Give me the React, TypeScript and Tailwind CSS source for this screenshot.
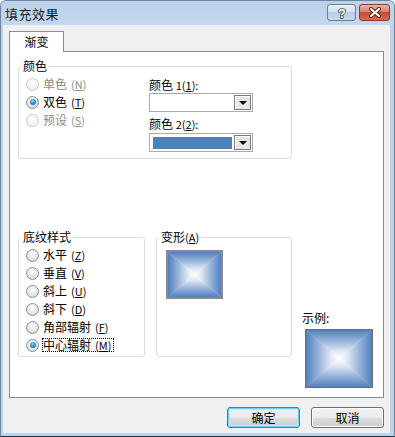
import type { ReactNode } from "react";

function Radio({ checked, disabled }: { checked?: boolean; disabled?: boolean }) {
  return (
    <span
      className={
        disabled
          ? "w-[13px] h-[13px] rounded-full border border-[#c9c9c9] bg-[radial-gradient(circle_at_50%_35%,#ffffff,#ececec)] flex items-center justify-center shrink-0"
          : "w-[13px] h-[13px] rounded-full border border-[#8e8f8f] bg-[radial-gradient(circle_at_50%_35%,#ffffff,#e6e6e6_55%,#cfcfcf)] flex items-center justify-center shrink-0"
      }
    >
      {checked && (
        <span className="w-[6px] h-[6px] rounded-full bg-[radial-gradient(circle_at_45%_35%,#8fd8ff,#1c86d4_55%,#0b5aa0)]" />
      )}
    </span>
  );
}

function Key({ k }: { k: string }) {
  return (
    <span className="text-[11px] ml-[4px] inline-block">
      (<u>{k}</u>)
    </span>
  );
}

function Option({
  label,
  k,
  checked,
  disabled,
  focused,
}: {
  label: string;
  k: string;
  checked?: boolean;
  disabled?: boolean;
  focused?: boolean;
}) {
  return (
    <div className="h-[18px] flex items-center gap-[3px]">
      <Radio checked={checked} disabled={disabled} />
      <span
        className={
          focused
            ? "shrink-0 flex items-center border border-dotted border-black leading-[12px] whitespace-nowrap pr-[2px]"
            : disabled
              ? "shrink-0 flex items-center border border-transparent leading-[12px] whitespace-nowrap text-[#8c8c8c]"
              : "shrink-0 flex items-center border border-transparent leading-[12px] whitespace-nowrap"
        }
      >
        {label}
        <Key k={k} />
      </span>
    </div>
  );
}

function Group({ title, className, children }: { title: ReactNode; className: string; children: ReactNode }) {
  return (
    <fieldset className={"border border-[#d5dfe5] rounded-[3px] " + className}>
      <legend className="ml-[2px] px-[2px] leading-[14px] whitespace-nowrap">{title}</legend>
      {children}
    </fieldset>
  );
}

function Stops() {
  return (
    <>
      <stop offset="0" stopColor="#4f81bd" />
      <stop offset="0.4" stopColor="#9ab5da" />
      <stop offset="0.75" stopColor="#e0e8f4" />
      <stop offset="1" stopColor="#ffffff" />
    </>
  );
}

function BoxGradient({ id }: { id: string }) {
  return (
    <svg viewBox="0 0 100 100" preserveAspectRatio="none" className="w-full h-full block">
      <defs>
        <linearGradient id={id + "t"} x1="0" y1="0" x2="0" y2="1">
          <Stops />
        </linearGradient>
        <linearGradient id={id + "b"} x1="0" y1="1" x2="0" y2="0">
          <Stops />
        </linearGradient>
        <linearGradient id={id + "l"} x1="0" y1="0" x2="1" y2="0">
          <Stops />
        </linearGradient>
        <linearGradient id={id + "r"} x1="1" y1="0" x2="0" y2="0">
          <Stops />
        </linearGradient>
      </defs>
      <polygon points="0,0 100,0 50,50" fill={`url(#${id}t)`} stroke={`url(#${id}t)`} strokeWidth="0.6" />
      <polygon points="0,100 100,100 50,50" fill={`url(#${id}b)`} stroke={`url(#${id}b)`} strokeWidth="0.6" />
      <polygon points="0,0 0,100 50,50" fill={`url(#${id}l)`} stroke={`url(#${id}l)`} strokeWidth="0.6" />
      <polygon points="100,0 100,100 50,50" fill={`url(#${id}r)`} stroke={`url(#${id}r)`} strokeWidth="0.6" />
    </svg>
  );
}

function ColorSelect({ color }: { color?: boolean }) {
  return (
    <div className="w-[104px] h-[19px] border border-[#a9abb0] bg-white flex p-px">
      <div className="flex-1 flex items-center pl-[2px] pr-[2px]">
        {color && <div className="w-full h-[12px] bg-[#4f81bd]" />}
      </div>
      <div className="w-[17px] border border-[#7a7a7a] bg-[#e6e6e6] shadow-[inset_1px_1px_0_#ffffff] flex items-center justify-center">
        <div className="w-0 h-0 border-x-[4px] border-x-transparent border-t-[4px] border-t-black" />
      </div>
    </div>
  );
}

export default function App() {
  return (
    <div className="w-[395px] h-[437px] bg-white font-[family-name:'Noto_Sans_CJK_SC','Noto_Sans',sans-serif] text-[12px] text-black">
      <div className="w-[395px] h-[437px] flex flex-col rounded-t-[6px] border border-[#6f86a2] border-b-[#1d2b3a] bg-[#bcd3ec] overflow-hidden">
        {/* title bar */}
        <div className="h-[24px] flex items-start pl-[4px] pr-[4px] bg-[linear-gradient(to_bottom,#bcd1ea,#c3d8ee)]">
          <span className="mt-[5px] text-[13px] leading-[15px] text-[#1e1e1e] tracking-[0.5px]">填充效果</span>
          <div className="ml-auto mt-[3px] flex gap-[3px]">
            <div className="w-[29px] h-[17px] rounded-[3px] border border-[#667f9c] bg-[linear-gradient(to_bottom,#eaf1f8_0%,#d3e0ee_45%,#b8cce2_50%,#c9daec_100%)] flex items-center justify-center">
              <svg width="12" height="14" viewBox="0 0 12 14">
                <text
                  x="6"
                  y="12"
                  textAnchor="middle"
                  fontSize="13"
                  fontWeight="bold"
                  fontFamily="Liberation Sans, sans-serif"
                  fill="#ffffff"
                  stroke="#3b4d62"
                  strokeWidth="1.6"
                  paintOrder="stroke"
                >
                  ?
                </text>
              </svg>
            </div>
            <div className="w-[31px] h-[17px] rounded-[3px] border border-[#8a3b2f] bg-[linear-gradient(to_bottom,#eab3a6_0%,#d9826e_45%,#c54a32_50%,#d36e4e_100%)] flex items-center justify-center">
              <svg width="14" height="11" viewBox="0 0 14 11">
                <path d="M3 2 L11 9 M11 2 L3 9" stroke="#4a1f18" strokeWidth="4" strokeLinecap="round" />
                <path d="M3 2 L11 9 M11 2 L3 9" stroke="#ffffff" strokeWidth="2.2" strokeLinecap="round" />
              </svg>
            </div>
          </div>
        </div>

        {/* client area */}
        <div className="ml-[2px] w-[387px] h-[408px] bg-[#f0f0f0] pt-[6px] pl-[6px]">
          <div className="relative z-10 -mb-px w-[55px] h-[21px] border border-b-0 border-[#898c95] bg-white flex items-center justify-center">
            渐变
          </div>
          <div className="w-[375px] h-[347px] border border-[#898c95] bg-white">
            <Group title="颜色" className="ml-[8px] mt-[7px] w-[274px] h-[100px]">
              <div className="flex">
                <div className="w-[130px] pl-[7px] pt-[2px]">
                  <Option label="单色" k="N" disabled />
                  <Option label="双色" k="T" checked />
                  <Option label="预设" k="S" disabled />
                </div>
                <div className="pt-[5px]">
                  <div className="leading-[14px]">
                    颜色 <span className="text-[11px]">1(<u>1</u>):</span>
                  </div>
                  <div className="mt-px">
                    <ColorSelect />
                  </div>
                  <div className="mt-[5px] leading-[14px]">
                    颜色 <span className="text-[11px]">2(<u>2</u>):</span>
                  </div>
                  <div className="mt-[2px]">
                    <ColorSelect color />
                  </div>
                </div>
              </div>
            </Group>

            <div className="mt-[71px] flex items-start">
              <Group title="底纹样式" className="ml-[8px] w-[127px] h-[127px]">
                <div className="pl-[7px] pt-[2px]">
                  <Option label="水平" k="Z" />
                  <Option label="垂直" k="V" />
                  <Option label="斜上" k="U" />
                  <Option label="斜下" k="D" />
                  <Option label="角部辐射" k="F" />
                  <Option label="中心辐射" k="M" checked focused />
                </div>
              </Group>
              <Group
                title={
                  <>
                    变形<span className="text-[11px]">(<u>A</u>)</span>
                  </>
                }
                className="ml-[11px] w-[136px] h-[127px]"
              >
                <div className="ml-[9px] mt-[6px] w-[57px] h-[49px] border-2 border-[#8a8a8a]">
                  <BoxGradient id="gpreview" />
                </div>
              </Group>
              <div className="ml-[10px] pt-[81px]">
                <div className="leading-[14px]">示例:</div>
                <div className="ml-[3px] mt-[4px] w-[68px] h-[59px] border border-[#6e6e6e]">
                  <BoxGradient id="gsample" />
                </div>
              </div>
            </div>
          </div>

          {/* buttons */}
          <div className="mt-[9px] w-[375px] flex justify-end gap-[11px]">
            <button className="w-[73px] h-[21px] rounded-[3px] border border-[#3c7fb1] bg-[linear-gradient(to_bottom,#f2f2f2_0%,#ebebeb_50%,#dddddd_51%,#cfcfcf_100%)] shadow-[inset_0_0_0_1px_#6fd0f5,inset_0_0_0_2px_#bde8f8] text-[12px] leading-[19px]">
              确定
            </button>
            <button className="w-[73px] h-[21px] rounded-[3px] border border-[#707070] bg-[linear-gradient(to_bottom,#f2f2f2_0%,#ebebeb_50%,#dddddd_51%,#cfcfcf_100%)] shadow-[inset_0_0_0_1px_#fcfcfc] text-[12px] leading-[19px]">
              取消
            </button>
          </div>
        </div>
      </div>
    </div>
  );
}
